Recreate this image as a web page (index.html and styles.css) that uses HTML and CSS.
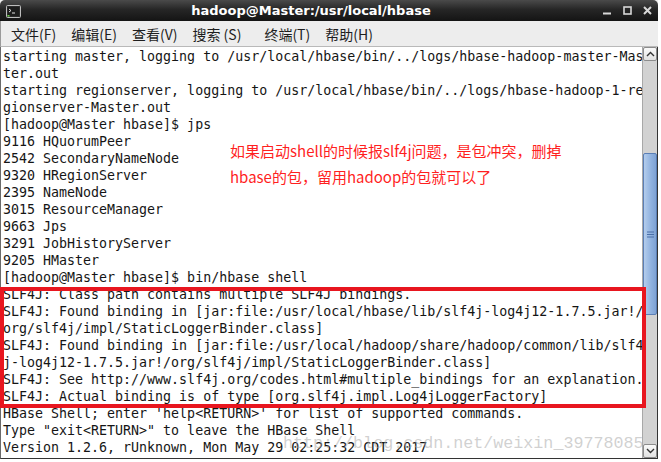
FILE: index.html
```html
<!DOCTYPE html>
<html lang="zh-CN">
<head>
  <meta charset="UTF-8">
  <title>hadoop@Master:/usr/local/hbase</title>
  <link rel="stylesheet" href="styles.css">
</head>
<body>
  <div class="window">
    <div class="titlebar">
      <div class="app-icon">
        <svg width="15" height="13" viewBox="0 0 15 13">
          <rect x="0.5" y="0.5" width="14" height="12" rx="1" fill="#3c3c3c" stroke="#bdbdbd"/>
          <rect x="1.5" y="1.5" width="12" height="10" fill="#1c1c1c"/>
          <path d="M3 4 L5 5.5 L3 7" stroke="#e0e0e0" fill="none" stroke-width="1"/>
          <path d="M6 8 H9" stroke="#e0e0e0" stroke-width="1"/>
          <rect x="1.5" y="10" width="2" height="1.5" fill="#6ad04a"/>
        </svg>
      </div>
      <div class="title">hadoop@Master:/usr/local/hbase</div>
      <div class="win-buttons">
        <svg width="9" height="9" viewBox="0 0 9 9"><path d="M0 7.5 H8" stroke="#d8d8d8" stroke-width="2"/></svg>
        <svg width="9" height="9" viewBox="0 0 9 9"><rect x="1" y="1" width="7" height="7" fill="none" stroke="#d8d8d8" stroke-width="1.6"/></svg>
        <svg width="9" height="9" viewBox="0 0 9 9"><path d="M1 1 L8 8 M8 1 L1 8" stroke="#d8d8d8" stroke-width="2"/></svg>
      </div>
    </div>

    <div class="menubar">
      <span>文件(F)</span>
      <span>编辑(E)</span>
      <span>查看(V)</span>
      <span>搜索 (S)</span>
      <span class="wide">终端(T)</span>
      <span>帮助(H)</span>
    </div>

    <div class="term-area">
<pre class="term">starting master, logging to /usr/local/hbase/bin/../logs/hbase-hadoop-master-Mas
ter.out
starting regionserver, logging to /usr/local/hbase/bin/../logs/hbase-hadoop-1-re
gionserver-Master.out
[hadoop@Master hbase]$ jps
9116 HQuorumPeer
2542 SecondaryNameNode
9320 HRegionServer
2395 NameNode
3015 ResourceManager
9663 Jps
3291 JobHistoryServer
9205 HMaster
[hadoop@Master hbase]$ bin/hbase shell
SLF4J: Class path contains multiple SLF4J bindings.
SLF4J: Found binding in [jar:file:/usr/local/hbase/lib/slf4j-log4j12-1.7.5.jar!/
org/slf4j/impl/StaticLoggerBinder.class]
SLF4J: Found binding in [jar:file:/usr/local/hadoop/share/hadoop/common/lib/slf4
j-log4j12-1.7.5.jar!/org/slf4j/impl/StaticLoggerBinder.class]
SLF4J: See http://www.slf4j.org/codes.html#multiple_bindings for an explanation.
SLF4J: Actual binding is of type [org.slf4j.impl.Log4jLoggerFactory]
HBase Shell; enter 'help&lt;RETURN&gt;' for list of supported commands.
Type "exit&lt;RETURN&gt;" to leave the HBase Shell
Version 1.2.6, rUnknown, Mon May 29 02:25:32 CDT 2017</pre>

      <div class="scrollbar">
        <div class="sb-btn">
          <svg width="9" height="6" viewBox="0 0 9 6"><path d="M1 5 L4.5 1.5 L8 5" stroke="#333" stroke-width="1.4" fill="none"/></svg>
        </div>
        <div class="sb-track">
          <div class="sb-thumb">
            <svg width="7" height="7" viewBox="0 0 7 7"><path d="M0 1 H7 M0 3.5 H7 M0 6 H7" stroke="#4a6fa8" stroke-width="1"/></svg>
          </div>
        </div>
        <div class="sb-btn">
          <svg width="9" height="6" viewBox="0 0 9 6"><path d="M1 1 L4.5 4.5 L8 1" stroke="#333" stroke-width="1.4" fill="none"/></svg>
        </div>
      </div>

      <!-- annotations drawn over the screenshot -->
      <div class="note">如果启动shell的时候报slf4j问题，是包冲突，删掉<br>hbase的包，留用hadoop的包就可以了</div>
      <div class="redbox"></div>
      <div class="watermark">http://blog.csdn.net/weixin_39778085</div>
    </div>
  </div>
</body>
</html>
```

FILE: styles.css
```css
body { margin: 0; background: #fff; width: 661px; height: 462px; overflow: hidden; }
.window { width: 658px; height: 459px; display: flex; flex-direction: column; background: #ededed; }

.titlebar {
  height: 21px;
  display: flex;
  align-items: center;
  background: linear-gradient(#4a4a4a, #262626 45%, #141414);
  border-radius: 5px 5px 0 0;
  color: #fff;
}
.app-icon { width: 22px; padding-left: 6px; box-sizing: border-box; display: flex; margin-top: 2px; }
.title {
  flex: 1;
  text-align: center;
  font-family: "DejaVu Sans", sans-serif;
  font-weight: bold;
  font-size: 13px;
}
.win-buttons { width: 58px; display: flex; gap: 11px; align-items: center; padding-right: 6px; box-sizing: border-box; justify-content: flex-end; }

.menubar {
  height: 25px;
  display: flex;
  align-items: center;
  gap: 15px;
  padding-left: 10px;
  border-bottom: 1px solid #b9b9b9;
  font-family: "Noto Sans CJK SC", "Noto Sans", sans-serif;
  font-size: 14px;
  color: #1e1e1e;
  border-left: 1px solid #9a9a9a;
}
.menubar .wide { margin-left: 8px; }

.term-area {
  flex: 1;
  display: flex;
  position: relative;
  background: #fff;
  border-left: 1px solid #6a6a6a;
  border-bottom: 1px solid #333;
  border-right: 1px solid #333;
}
.term {
  flex: 1;
  margin: 0;
  padding: 1px 0 0 2px;
  font-family: "DejaVu Sans Mono", monospace;
  font-size: 13.3px;
  line-height: 17px;
  color: #151515;
  overflow: hidden;
}

.scrollbar { width: 14px; display: flex; flex-direction: column; background: #d2d2d2; border-left: 1px solid #a8a8a8; }
.sb-btn {
  height: 14px;
  display: flex;
  align-items: center;
  justify-content: center;
  background: linear-gradient(#fafafa, #e2e2e2);
  border: 1px solid #8c8c8c;
  border-radius: 2px;
  box-sizing: border-box;
}
.sb-track { flex: 1; }
.sb-thumb {
  margin-top: 92px;
  height: 162px;
  background: linear-gradient(90deg, #b4cdec, #8fb1df 60%, #7ea2d4);
  border: 1px solid #5b7fb6;
  border-radius: 2px;
  box-sizing: border-box;
  display: flex;
  align-items: center;
  justify-content: center;
}

.note {
  position: absolute;
  left: 229px;
  top: 91px;
  font-family: "Noto Sans CJK SC", sans-serif;
  font-size: 15px;
  line-height: 26px;
  color: #ff1f1f;
}
.redbox {
  position: absolute;
  left: -1px;
  top: 240px;
  width: 646px;
  height: 121px;
  border: 4px solid #e8161f;
  box-sizing: border-box;
}
.watermark {
  position: absolute;
  left: 282px;
  top: 387px;
  font-family: "Liberation Mono", monospace;
  font-size: 16.7px;
  line-height: 20px;
  color: rgba(170, 170, 170, 0.55);
}
```
